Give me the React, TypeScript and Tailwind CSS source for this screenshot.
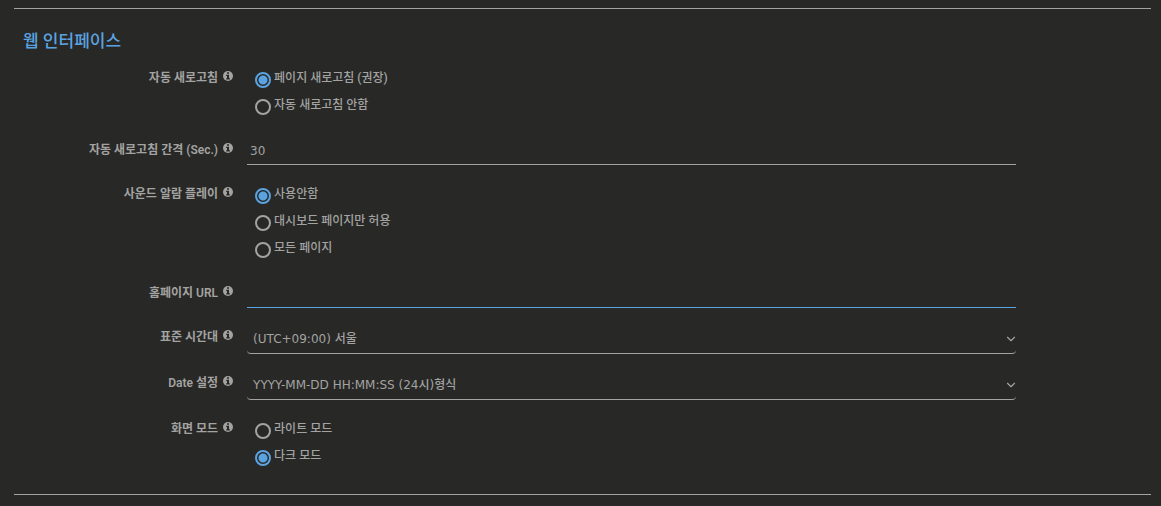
import { useState } from 'react';
import type { ReactNode } from 'react';
import { ChevronDown } from 'lucide-react';

type FieldRowProps = {
  label: string;
  htmlFor?: string;
  children: ReactNode;
};

type RadioFieldProps = {
  label: string;
  name: string;
  options: string[];
  initial: string;
};

type SelectFieldProps = {
  label: string;
  id: string;
  options: string[];
};

function InfoIcon() {
  return (
    <svg viewBox="0 0 10 10" className="w-[10px] h-[10px] mt-[7px] shrink-0" aria-hidden="true">
      <circle cx="5" cy="5" r="5" fill="#a3a3a1" />
      <path d="M4 1.2h2v1.5H4zM3.2 3.7H6v3.5h.9v1.2H3.2V7.2H4V4.9h-.8z" fill="#282827" />
    </svg>
  );
}

function FieldRow({ label, htmlFor, children }: FieldRowProps) {
  return (
    <div className="flex items-start">
      <div className="w-[20.5%] shrink-0 flex justify-end gap-[5px] pr-[14px]">
        {htmlFor ? (
          <label htmlFor={htmlFor} className="leading-[29px] font-semibold">{label}</label>
        ) : (
          <span className="leading-[29px] font-semibold">{label}</span>
        )}
        <InfoIcon />
      </div>
      <div className="w-[67.6%]">{children}</div>
    </div>
  );
}

function RadioField({ label, name, options, initial }: RadioFieldProps) {
  const [value, setValue] = useState(initial);

  return (
    <FieldRow label={label}>
      <div role="radiogroup" aria-label={label} className="pl-2 pb-[3px]">
        {options.map((option) => (
          <label key={option} className="flex items-start gap-[3px] h-[27px] w-fit">
            <input
              type="radio"
              name={name}
              checked={value === option}
              onChange={() => setValue(option)}
              className="appearance-none w-4 h-4 mt-2 shrink-0 rounded-full border-2 border-[#a3a3a1] checked:border-[#5ba3e0] checked:bg-[radial-gradient(circle,#5ba3e0_4px,transparent_5px)]"
            />
            <span className="leading-[29px] font-medium">{option}</span>
          </label>
        ))}
      </div>
    </FieldRow>
  );
}

function SelectField({ label, id, options }: SelectFieldProps) {
  return (
    <FieldRow label={label} htmlFor={id}>
      <div className="relative">
        <select
          id={id}
          className="appearance-none block w-full h-[31px] px-[6px] pt-[2px] bg-transparent border-b border-[#a3a3a1] rounded-[4px] outline-none font-medium font-['DejaVu_Sans','Noto_Sans_CJK_KR',sans-serif]"
        >
          {options.map((option) => (
            <option key={option}>{option}</option>
          ))}
        </select>
        <ChevronDown size={14} className="absolute -right-[2px] top-[9px] pointer-events-none" />
      </div>
    </FieldRow>
  );
}

export default function App() {
  const [interval, setRefreshInterval] = useState('30');
  const [homepage, setHomepage] = useState('');

  return (
    <main className="min-h-screen bg-[#282827] text-[#a3a3a1] text-[12px] pt-2 pl-[14px] pr-[10px] font-['Roboto','Noto_Sans_CJK_KR',sans-serif]">
      <section className="border-y border-[#a3a3a1] pb-[22px]">
        <h2 className="pt-5 pl-[9px] mb-[11px] text-[17px] leading-6 font-medium text-[#5ba3e0]">
          웹 인터페이스
        </h2>
        <form className="flex flex-col gap-[15px]">
          <RadioField
            label="자동 새로고침"
            name="refresh"
            options={['페이지 새로고침 (권장)', '자동 새로고침 안함']}
            initial="페이지 새로고침 (권장)"
          />
          <FieldRow label="자동 새로고침 간격 (Sec.)" htmlFor="interval">
            <input
              id="interval"
              type="text"
              value={interval}
              onChange={(e) => setRefreshInterval(e.target.value)}
              className="block w-full h-[29px] px-[3px] pt-[2px] bg-transparent border-b border-[#a3a3a1] outline-none font-medium font-['DejaVu_Sans','Noto_Sans_CJK_KR',sans-serif]"
            />
          </FieldRow>
          <RadioField
            label="사운드 알람 플레이"
            name="sound"
            options={['사용안함', '대시보드 페이지만 허용', '모든 페이지']}
            initial="사용안함"
          />
          <FieldRow label="홈페이지 URL" htmlFor="homepage">
            <input
              id="homepage"
              type="text"
              value={homepage}
              onChange={(e) => setHomepage(e.target.value)}
              className="block w-full h-[29px] px-[3px] pt-[2px] bg-transparent border-b border-[#5ba3e0] outline-none font-medium font-['DejaVu_Sans','Noto_Sans_CJK_KR',sans-serif]"
            />
          </FieldRow>
          <SelectField label="표준 시간대" id="timezone" options={['(UTC+09:00) 서울']} />
          <SelectField label="Date 설정" id="date-format" options={['YYYY-MM-DD HH:MM:SS (24시)형식']} />
          <RadioField
            label="화면 모드"
            name="theme"
            options={['라이트 모드', '다크 모드']}
            initial="다크 모드"
          />
        </form>
      </section>
    </main>
  );
}
